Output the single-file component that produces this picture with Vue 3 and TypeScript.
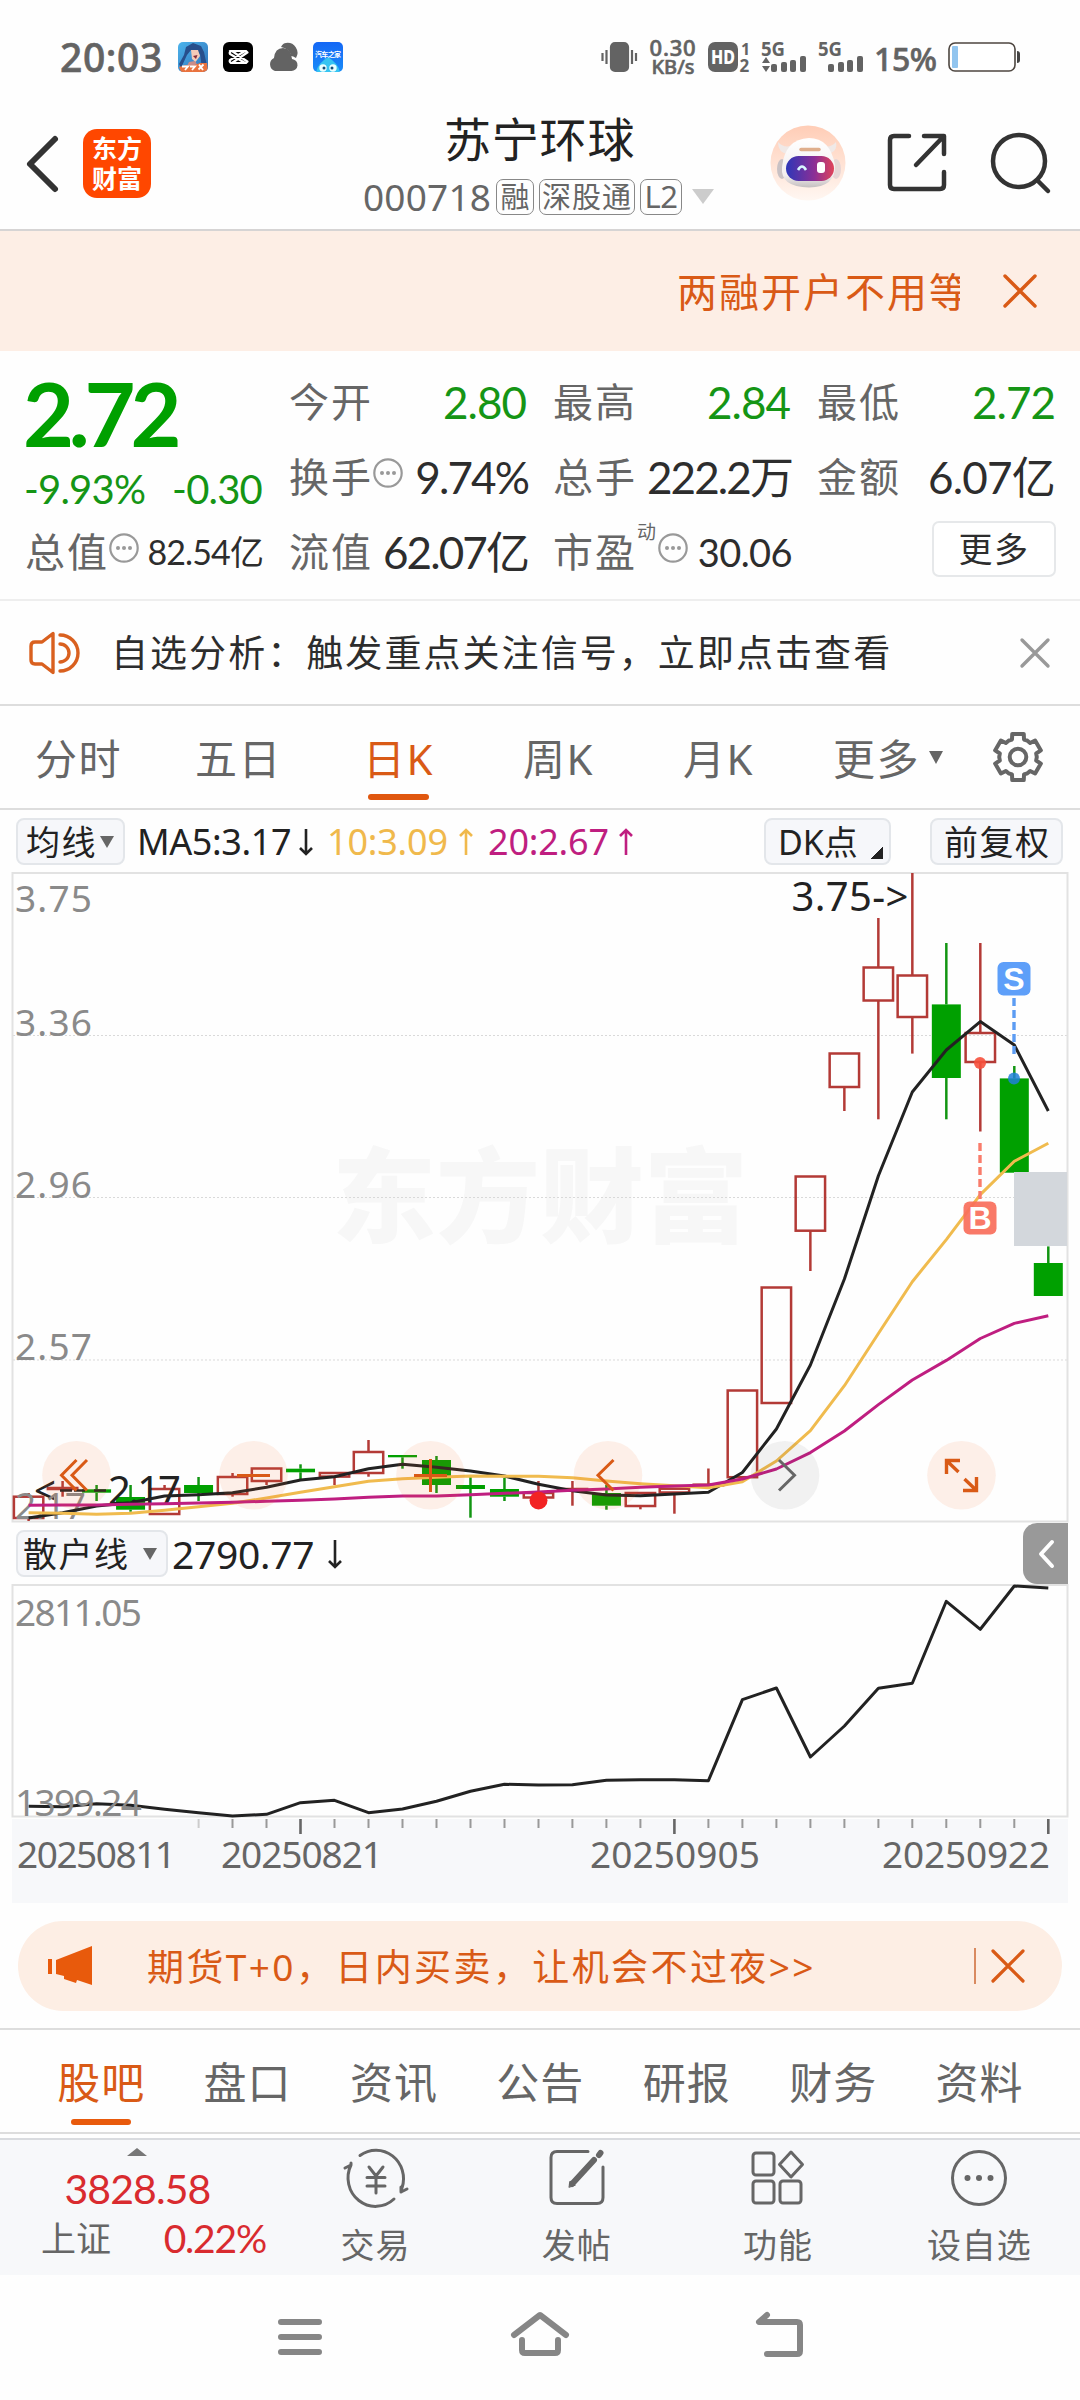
<script setup lang="ts">
type Candle = { up: boolean; top: number; bottom: number; high?: number; low?: number }

const periods = ['分时', '五日', '日K', '周K', '月K']
const sections = ['股吧', '盘口', '资讯', '公告', '研报', '财务', '资料']

// Canvas coordinates are measured from the top of the chart area
const X0 = 28.6
const STEP = 33.99
const TOP = 872
const xAt = (i: number) => X0 + STEP * i
const line = (values: number[], top: number) =>
  values.map((v, i) => `${xAt(i).toFixed(1)},${(v - top).toFixed(1)}`).join(' ')

const candles: Candle[] = [
  { up: true, top: 1496.7, bottom: 1518, high: 1493, low: 1521 },
  { up: true, top: 1488, bottom: 1489, high: 1481, low: 1496.7 },
  { up: false, top: 1489.3, bottom: 1492.7, high: 1485, low: 1501 },
  { up: false, top: 1497, bottom: 1509.7, high: 1485, low: 1511.7 },
  { up: true, top: 1489, bottom: 1514, high: 1485 },
  { up: false, top: 1485, bottom: 1493, high: 1477, low: 1501 },
  { up: true, top: 1477, bottom: 1494, high: 1473, low: 1496.7 },
  { up: true, top: 1468.5, bottom: 1481, low: 1485 },
  { up: false, top: 1468.7, bottom: 1472.3, high: 1464.3, low: 1479 },
  { up: true, top: 1473, bottom: 1476.6, low: 1485 },
  { up: true, top: 1452, bottom: 1473, high: 1440, low: 1476.7 },
  { up: false, top: 1455, bottom: 1457.3, low: 1468.7 },
  { up: false, top: 1460, bottom: 1485, high: 1456, low: 1493 },
  { up: false, top: 1485, bottom: 1489, high: 1477, low: 1517.7 },
  { up: false, top: 1489, bottom: 1496.7, high: 1478, low: 1501 },
  { up: true, top: 1493, bottom: 1497.5, high: 1481 },
  { up: true, top: 1489, bottom: 1490, high: 1481, low: 1505.7 },
  { up: false, top: 1493, bottom: 1505.7, high: 1485, low: 1509.7 },
  { up: true, top: 1493, bottom: 1506, low: 1509.3 },
  { up: true, top: 1488.7, bottom: 1492.5, low: 1513.7 },
  { up: true, top: 1484.7, bottom: 1485.3, high: 1468.5 },
  { up: true, top: 1390.5, bottom: 1477.2 },
  { up: true, top: 1287.5, bottom: 1403 },
  { up: true, top: 1176.5, bottom: 1230.7, low: 1271 },
  { up: true, top: 1053.5, bottom: 1087, low: 1111 },
  { up: true, top: 967.5, bottom: 1000.5, high: 918, low: 1119.3 },
  { up: true, top: 975.5, bottom: 1017, high: 873, low: 1053.6 },
  { up: false, top: 1004.4, bottom: 1078, high: 943, low: 1119.3 },
  { up: true, top: 1033, bottom: 1062, high: 943, low: 1131.5 },
  { up: false, top: 1078.4, bottom: 1172.7, high: 1066 },
  { up: false, top: 1263, bottom: 1296, high: 1246.4 },
]

const ma5 = [1518, 1512.7, 1506, 1502.7, 1496, 1494.7, 1492.7, 1487.3, 1480, 1476.7, 1468.7, 1464.3, 1467.3, 1471, 1476, 1484.3, 1490.7, 1495, 1495.7, 1494, 1492.3, 1472.5, 1429, 1365, 1279, 1175.7, 1092, 1050, 1021.6, 1045, 1111]
const ma10 = [1512.7, 1513.3, 1514.3, 1513.3, 1510.3, 1506.7, 1503.3, 1498, 1492.3, 1486.7, 1481.3, 1478.7, 1477.3, 1476, 1476.3, 1476.3, 1477.7, 1481, 1483.7, 1485.7, 1487.7, 1481.7, 1461, 1430.7, 1385.7, 1333.5, 1281.7, 1239.6, 1194.6, 1161.3, 1143.2]
const ma20 = [1505.3, 1505, 1505, 1504.3, 1503.7, 1503, 1502.3, 1501.3, 1500.3, 1499, 1497.3, 1496, 1496, 1494.7, 1493.3, 1492, 1490.3, 1489, 1487.3, 1486, 1485, 1479, 1469, 1452.6, 1431, 1404.6, 1380, 1360.4, 1338.5, 1323.4, 1315.8]
const retail = [1806.3, 1806.7, 1803.7, 1805.3, 1809.3, 1812.7, 1816, 1814.3, 1802.7, 1800.3, 1812.7, 1809, 1801.3, 1791.3, 1784.3, 1785, 1784.7, 1780.3, 1779.7, 1779.7, 1780.7, 1699.7, 1688, 1757, 1726, 1688.3, 1683.3, 1601.3, 1629.3, 1586, 1588]

const priceLabels = [
  { t: '3.75', y: 911.5 },
  { t: '3.36', y: 1035.5 },
  { t: '2.96', y: 1197.5 },
  { t: '2.57', y: 1359.5 },
]
const dates = [
  { t: '20250811', x: 17, w: 159 },
  { t: '20250821', x: 221, w: 162 },
  { t: '20250905', x: 590, w: 170 },
  { t: '20250922', x: 882, w: 168 },
]
const ticks = Array.from({ length: 26 }, (_, k) => k + 5)

const gear = Array.from({ length: 6 }, (_, k) => {
  const a = -90 + 60 * k
  const spots: [number, number][] = [[-19, 18.5], [-14, 23.8], [14, 23.8], [19, 18.5], [30, 18.8]]
  return spots.map(([d, r]) => {
    const t = ((a + d) * Math.PI) / 180
    return `${(26 + r * Math.cos(t)).toFixed(2)},${(26 + r * Math.sin(t)).toFixed(2)}`
  }).join(' ')
}).join(' ')
</script>

<template>
  <main class="phone">
    <div class="status">
      <span class="clock">20:03</span>
      <svg class="apps" width="166" height="30" viewBox="0 0 166 30">
        <defs>
          <linearGradient id="sky" x1="0" y1="0" x2="1" y2="1">
            <stop offset="0" stop-color="#4cb4ec" /><stop offset="1" stop-color="#2f70b8" />
          </linearGradient>
          <linearGradient id="blue" x1="0" y1="0" x2="0" y2="1">
            <stop offset="0" stop-color="#1467f5" /><stop offset="1" stop-color="#1a8cf8" />
          </linearGradient>
          <clipPath id="a1"><rect width="30" height="30" rx="5" /></clipPath>
          <clipPath id="a4"><rect x="135" width="30" height="30" rx="5" /></clipPath>
        </defs>
        <g clip-path="url(#a1)">
          <rect width="30" height="30" fill="url(#sky)" />
          <path d="M8 5 15 1 23 4 26 10 29 24 24 26 22 12 13 8 9 13 3 26 1 22 6 13z" fill="#274f8c" />
          <path d="M13 8 20 8 22 14 17.500 20 14 17z" fill="#f4cbb8" />
          <path d="M15 14 19.500 13 18 17z" fill="#842b38" />
          <path d="M11 20 17 19 20 24H9z" fill="#c98d8a" />
          <path d="M1 25 8 23 14 24 22 21 29 21 30 30H3z" fill="#e9733f" />
          <path d="M4 24.500h6l-3 3.500M12 24.500h5l-3 3.500M21 22.500l4 5.500M25.500 22.500l-5 5" stroke="#fff" stroke-width="1.800" fill="none" />
        </g>
        <rect x="45" width="30" height="30" rx="6" fill="#000" />
        <path d="M70 10 54 21h14l2-2M70 20 54 9h14l2 2M53 9q-2 1-1 3l15 9M53 21q-2-1-1-3l15-9" fill="none" stroke="#fff" stroke-width="2.200" />
        <path d="M108 1a10 10 0 0 1 10 15q-3-2-5-2-1-7-10-9 2-4 5-4z" fill="#636363" />
        <path d="M97 29a7 7 0 0 1-1-13q1-10 9-10 8 0 9 11a6 6 0 0 1-1 12z" fill="#636363" />
        <g clip-path="url(#a4)">
          <rect x="135" width="30" height="30" fill="url(#blue)" />
          <path d="M138 31Q139 22 150 15q11 7 12 16z" fill="#36c4f2" />
          <circle cx="145" cy="26" r="3.700" fill="#eaffff" /><circle cx="155" cy="26" r="3.700" fill="#eaffff" />
          <circle cx="146" cy="26" r="1.500" fill="#164c78" /><circle cx="154" cy="26" r="1.500" fill="#164c78" />
          <text x="137" y="15" font-size="7" font-weight="700" fill="#fff" textLength="26">汽车之家</text>
        </g>
      </svg>
      <svg class="vibrate" width="37" height="30" viewBox="0 0 37 30" fill="none" stroke="#636363" stroke-width="2.200">
        <rect x="10" y="1" width="17" height="28" rx="4" fill="#636363" />
        <path d="M1.500 11v8M5.500 8v14M31 8v14M35 11v8" />
      </svg>
      <div class="speed"><b>0.30</b><span>KB/s</span></div>
      <svg class="signals" width="160" height="30" viewBox="0 0 160 30" fill="#636363">
        <rect width="30" height="30" rx="7" />
        <text x="3" y="22" font-size="19" font-weight="800" fill="#fff" textLength="24" lengthAdjust="spacingAndGlyphs">HD</text>
        <text x="33" y="12.500" font-size="16" font-weight="700">1</text>
        <text x="31.500" y="30" font-size="17" font-weight="700">2</text>
        <text x="53" y="14" font-size="19" font-weight="700" textLength="24" lengthAdjust="spacingAndGlyphs">5G</text>
        <path d="m58 15 4 6h-8zM58 30l4-6h-8z" />
        <rect x="63" y="22" width="6" height="8" rx="2" /><rect x="73" y="20" width="6" height="10" rx="2" /><rect x="82" y="18" width="6" height="12" rx="2" /><rect x="92" y="14" width="6" height="16" rx="2" />
        <text x="110" y="14" font-size="19" font-weight="700" textLength="24" lengthAdjust="spacingAndGlyphs">5G</text>
        <rect x="120" y="22" width="6" height="8" rx="2" /><rect x="130" y="20" width="6" height="10" rx="2" /><rect x="139" y="18" width="6" height="12" rx="2" /><rect x="149" y="14" width="6" height="16" rx="2" />
      </svg>
      <span class="percent">15%</span>
      <svg class="battery" width="73" height="30" viewBox="0 0 73 30">
        <rect x="1" y="1" width="66" height="28" rx="6" fill="#fff" stroke="#4d4640" stroke-width="1.600" />
        <rect x="4" y="4" width="6" height="22" rx="1" fill="#92c5ef" />
        <path d="M69 9q3 0 3 3v6q0 3-3 3z" fill="#444" />
      </svg>
    </div>

    <header class="head">
      <svg class="back" width="34" height="60" viewBox="0 0 34 60" fill="none" stroke="#333" stroke-width="6" stroke-linecap="round" stroke-linejoin="round"><path d="M30 6 5 31 30 56" /></svg>
      <div class="logo"><span>东方</span><span>财富</span></div>
      <div class="title">
        <h1>苏宁环球</h1>
        <div class="code">
          <span>000718</span><i class="w1">融</i><i class="w3">深股通</i><i class="w2">L2</i><em></em>
        </div>
      </div>
      <svg class="robot" width="76" height="76" viewBox="0 0 76 76">
        <defs>
          <linearGradient id="peach" x1="0" y1="0" x2="0" y2="1"><stop offset="0" stop-color="#ffcdb6" /><stop offset="1" stop-color="#fff7f2" /></linearGradient>
          <linearGradient id="visor"><stop offset="0" stop-color="#2d37b8" /><stop offset=".6" stop-color="#8d2f95" /><stop offset="1" stop-color="#e0435a" /></linearGradient>
          <linearGradient id="shell" x1="0" y1="0" x2="0" y2="1"><stop offset="0" stop-color="#fff" /><stop offset=".75" stop-color="#f3eeee" /><stop offset="1" stop-color="#c4bfc0" /></linearGradient>
        </defs>
        <circle cx="38" cy="38" r="37.500" fill="url(#peach)" />
        <path d="M8 17Q8 28 18 29L24 20Q14 24 8 17zM66 17Q68 28 56 29L51 20Q60 24 66 17z" fill="#f0e9e7" />
        <ellipse cx="12" cy="44" rx="5" ry="10" fill="#c9c1c4" /><ellipse cx="66" cy="44" rx="5" ry="10" fill="#e6d5d5" />
        <path d="M39 13Q60 13 65 40 66 62 39 62.500 10 62 12 42 15 14 39 13z" fill="url(#shell)" />
        <rect x="16" y="31" width="48" height="25" rx="12.500" fill="url(#visor)" />
        <path d="M31 24.500h18" stroke="#dfae8c" stroke-width="3.500" stroke-linecap="round" />
        <path d="M28 45q4-7 8 0" fill="none" stroke="#d8f6ff" stroke-width="2.600" />
        <rect x="47" y="37" width="8" height="11" rx="3" fill="#fff" />
      </svg>
      <svg class="share" width="60" height="60" viewBox="0 0 60 60" fill="none" stroke="#333" stroke-width="4.500" stroke-linecap="round" stroke-linejoin="round">
        <path d="M22 3H7Q3 3 3 7v45q0 4 4 4h46q4 0 4-4V39M37 3h20v18M56 4 29 32" />
      </svg>
      <svg class="search" width="62" height="62" viewBox="0 0 62 62" fill="none" stroke="#333" stroke-width="4.500" stroke-linecap="round"><circle cx="29" cy="29" r="26" /><path d="M48 49 58 59" /></svg>
    </header>

    <div class="marquee">
      <div class="marquee-text">两融开户不用等</div>
      <svg width="36" height="36" viewBox="0 0 36 36" fill="none" stroke="#d95a16" stroke-width="3.400" stroke-linecap="round"><path d="M3 3 33 33M33 3 3 33" /></svg>
    </div>

    <section class="quote">
      <div class="price">
        <strong>2.72</strong>
        <div><span>-9.93%</span><span>-0.30</span></div>
      </div>
      <div class="cell"><label>今开</label><b class="g">2.80</b></div>
      <div class="cell"><label>最高</label><b class="g">2.84</b></div>
      <div class="cell"><label>最低</label><b class="g">2.72</b></div>
      <div class="cell"><label>换手</label><svg class="info" viewBox="0 0 30 30"><circle cx="15" cy="15" r="13.700" fill="none" stroke="#999" stroke-width="2.200" /><circle cx="9" cy="15" r="2" /><circle cx="15" cy="15" r="2" /><circle cx="21" cy="15" r="2" /></svg><b class="tight">9.74%</b></div>
      <div class="cell"><label>总手</label><b class="tight">222.2万</b></div>
      <div class="cell"><label>金额</label><b>6.07亿</b></div>
      <div class="cell"><label>总值</label><svg class="info" viewBox="0 0 30 30"><circle cx="15" cy="15" r="13.700" fill="none" stroke="#999" stroke-width="2.200" /><circle cx="9" cy="15" r="2" /><circle cx="15" cy="15" r="2" /><circle cx="21" cy="15" r="2" /></svg><b class="sm">82.54亿</b></div>
      <div class="cell"><label>流值</label><b class="tight">62.07亿</b></div>
      <div class="cell"><label>市盈</label><sup>动</sup><svg class="info" viewBox="0 0 30 30"><circle cx="15" cy="15" r="13.700" fill="none" stroke="#999" stroke-width="2.200" /><circle cx="9" cy="15" r="2" /><circle cx="15" cy="15" r="2" /><circle cx="21" cy="15" r="2" /></svg><b class="md">30.06</b></div>
      <div class="cell end"><button>更多</button></div>
    </section>

    <div class="notice">
      <svg width="54" height="44" viewBox="0 0 54 44" fill="none" stroke="#d9601f" stroke-width="3.400" stroke-linecap="round" stroke-linejoin="round">
        <path d="M24 2.500v39L13 33H6q-4 0-4-4V15q0-4 4-4h7z" /><path d="M31 13a9 9 0 0 1 0 18M31 4a18 18 0 0 1 0 36" />
      </svg>
      <p>自选分析：触发重点关注信号，立即点击查看</p>
      <svg width="32" height="32" viewBox="0 0 32 32" fill="none" stroke="#999" stroke-width="3.400" stroke-linecap="round"><path d="M3 3 29 29M29 3 3 29" /></svg>
    </div>

    <nav class="periods">
      <a v-for="(p, i) in periods" :key="p" :class="{ on: i === 2 }">{{ p }}</a>
      <a class="more">更多<i></i></a>
      <svg width="52" height="52" viewBox="0 0 52 52" fill="none" stroke="#666" stroke-width="4" stroke-linejoin="round"><polygon :points="gear" /><circle cx="26" cy="26" r="8.300" /></svg>
    </nav>

    <div class="averages">
      <span class="chip avg">均线<i></i></span>
      <span class="ma m5">MA5:3.17</span>
      <svg class="arr" viewBox="0 0 16 30" stroke="#222"><path d="M8 2v25M2 21l6 6 6-6" /></svg>
      <span class="ma m10">10:3.09</span>
      <svg class="arr" viewBox="0 0 16 30" stroke="#f0b94c"><path d="M8 28V3M2 9l6-6 6 6" /></svg>
      <span class="ma m20">20:2.67</span>
      <svg class="arr" viewBox="0 0 16 30" stroke="#bf1e80"><path d="M8 28V3M2 9l6-6 6 6" /></svg>
      <span class="chip dk">DK点<i></i></span>
      <span class="chip adj">前复权</span>
    </div>

    <svg class="kline" width="1080" height="651" viewBox="0 0 1080 651">
      <text class="mark" x="332" y="363" textLength="416" lengthAdjust="spacingAndGlyphs">东方财富</text>
      <g stroke="#d9d9d9" stroke-width="1" stroke-dasharray="2 2"><path d="M13 163.500H1067M13 325.500H1067M13 488H1067" /></g>
      <rect x="12.500" y="1" width="1055" height="648.500" fill="none" stroke="#e2e2e2" stroke-width="2" />
      <text v-for="l in priceLabels" :key="l.t" class="axis" x="15" :y="l.y - TOP" textLength="77">{{ l.t }}</text>
      <g v-for="(c, i) in candles" :key="i" :stroke="c.up ? '#b33a36' : '#129512'" stroke-width="2.500">
        <line v-if="c.high" :x1="xAt(i)" :x2="xAt(i)" :y1="c.high - TOP" :y2="c.top - TOP" />
        <line v-if="c.low" :x1="xAt(i)" :x2="xAt(i)" :y1="c.bottom - TOP" :y2="c.low - TOP" />
        <rect v-if="c.up" :x="xAt(i) - 14.7" :y="c.top - TOP" width="29.400" :height="c.bottom - c.top" fill="none" />
        <rect v-else :x="xAt(i) - 14.5" :y="c.top - TOP" width="29" :height="c.bottom - c.top" fill="#00a000" stroke="none" />
      </g>
      <text class="note" x="34" y="633" textLength="22" lengthAdjust="spacingAndGlyphs">&lt;</text>
      <text class="axis" x="15" y="647" textLength="71">2.17</text>
      <path d="M60 618.500h12M74 618.500h11M94 618.500h12" stroke="#222" stroke-width="2.600" />
      <text class="note" x="108" y="633" textLength="73">2.17</text>
      <g fill="none" stroke-linejoin="round">
        <polyline :points="line(ma5, TOP)" stroke="#222" stroke-width="3" />
        <polyline :points="line(ma10, TOP)" stroke="#f0bb4e" stroke-width="3" />
        <polyline :points="line(ma20, TOP)" stroke="#bf1e80" stroke-width="3" />
      </g>
      <circle cx="538.500" cy="628.500" r="9" fill="#f22323" />
      <text class="note" x="791.500" y="39" textLength="117">3.75-&gt;</text>
      <rect x="1014" y="300" width="53" height="74" fill="#d3d7dc" />
      <path d="M1014 126v56" stroke="#5c9cf3" stroke-width="3.400" stroke-dasharray="8 4" />
      <circle cx="1014" cy="206.400" r="6" fill="#2080d8" opacity=".85" />
      <rect x="997.500" y="90" width="33" height="33.500" rx="6" fill="#5e9ff9" />
      <text class="flag" x="1014" y="118">S</text>
      <path d="M980 271v56" stroke="#f97c6b" stroke-width="3.400" stroke-dasharray="8 4" />
      <circle cx="980" cy="191" r="6" fill="#f6503c" opacity=".9" />
      <rect x="963.500" y="329.500" width="33" height="33" rx="6" fill="#f86e5b" opacity=".92" />
      <text class="flag" x="980" y="357">B</text>
      <g fill="#f66e28" fill-opacity=".1">
        <circle cx="76.500" cy="603.300" r="34.300" /><circle cx="253.500" cy="603.300" r="34.300" /><circle cx="430.500" cy="603.300" r="34.300" /><circle cx="608" cy="603.300" r="34.300" />
        <circle cx="961.500" cy="603.300" r="34.300" /><circle cx="785" cy="603.300" r="34.300" fill="#444" fill-opacity=".07" />
      </g>
      <g fill="none" stroke="#d95a16" stroke-width="3">
        <path d="M76.500 588 61.500 603.300 76.500 618.500M87 588 72 603.300 87 618.500" />
        <path d="M237 603.500h33M414 603.500h33M430.500 587v33" />
        <path d="M613.500 588 598 603.300 613.500 618.500" />
        <path d="M779 588 794.500 603.300 779 618.500" stroke="#666" />
        <path d="M960 588.500H946.500V602M947 589 958.500 600M963 618.500H976.500V605M976 618 964.500 607" stroke-width="3.400" />
      </g>
    </svg>

    <div class="indicator">
      <span class="chip retail">散户线<i></i></span>
      <span class="val">2790.77</span>
      <svg class="arr" viewBox="0 0 16 30" stroke="#222"><path d="M8 1v27M2 22l6 6 6-6" /></svg>
      <span class="drawer"><svg width="18" height="30" viewBox="0 0 18 30" fill="none" stroke="#fff" stroke-width="4" stroke-linecap="round" stroke-linejoin="round"><path d="M15 3 4 15 15 27" /></svg></span>
    </div>

    <svg class="sub" width="1080" height="319" viewBox="0 0 1080 319">
      <rect x="12" y="235" width="1056" height="84" fill="#f7f8fa" />
      <rect x="12.500" y="1" width="1055" height="231.500" fill="none" stroke="#e2e2e2" stroke-width="2" />
      <text class="axis" x="15" y="42" textLength="127">2811.05</text>
      <polyline :points="line(retail, 1584)" fill="none" stroke="#222" stroke-width="3" stroke-linejoin="round" />
      <text class="axis" x="15" y="232" textLength="127">1399.24</text>
      <path v-for="i in ticks" :key="i" :d="`M${xAt(i).toFixed(1)} 235v${(i - 8) % 11 === 0 ? 15 : 9}`" :stroke="(i - 8) % 11 === 0 ? '#666' : i === 5 ? '#ccc' : '#999'" :stroke-width="(i - 8) % 11 === 0 ? 2.6 : 2" />
      <text v-for="d in dates" :key="d.t" class="date" :x="d.x" y="284" :textLength="d.w">{{ d.t }}</text>
    </svg>

    <div class="promo">
      <svg width="47" height="42" viewBox="0 0 47 42" fill="#e85a0c"><path d="M0 14h4v15H0zM8 15 44 1v39L29 35l-1 3-12-4v-3L8 29z" /></svg>
      <p>期货T+0，日内买卖，让机会不过夜&gt;&gt;</p>
      <u></u>
      <svg width="34" height="34" viewBox="0 0 34 34" fill="none" stroke="#d95a16" stroke-width="3.200" stroke-linecap="round"><path d="M2 2 32 32M32 2 2 32" /></svg>
    </div>

    <nav class="sections">
      <a v-for="(s, i) in sections" :key="s" :class="{ on: i === 0 }">{{ s }}</a>
    </nav>

    <footer class="dock">
      <div class="index">
        <em></em>
        <b>3828.58</b>
        <div><span>上证</span><b>0.22%</b></div>
      </div>
      <div class="act">
        <svg width="66" height="60" viewBox="0 0 66 60" fill="none" stroke="#666" stroke-width="3" stroke-linecap="round" stroke-linejoin="round">
          <path d="M17 7.500A27.500 28.500 0 0 1 59 40M51 51A27.500 28.500 0 0 1 8 17M8 17 2 20M8 17V15M58 44 64 41M58 44v-5M26 19l7 9 7-9M33 28v17M24 29.500h18M24 38h18" />
        </svg><span>交易</span>
      </div>
      <div class="act">
        <svg width="60" height="60" viewBox="0 0 60 60" fill="none" stroke="#666" stroke-width="3" stroke-linecap="round">
          <path d="M41 3.500H10q-6 0-6 6v40q0 6 6 6h40q6 0 6-6V19" /><path d="M47 12 25 36" stroke-width="6" /><path d="m22 39 1-6 5 4z" fill="#666" stroke-width="1" /><path d="M53.500 5 52 7" stroke-width="6" />
        </svg><span>发帖</span>
      </div>
      <div class="act">
        <svg width="60" height="60" viewBox="0 0 60 60" fill="none" stroke="#666" stroke-width="3" stroke-linejoin="round">
          <rect x="5" y="5" width="21" height="22" rx="3" /><rect x="5" y="33" width="21" height="22" rx="3" /><rect x="32" y="33" width="21" height="22" rx="3" /><path d="M43 4 54.500 16.500 43 29 31.500 16.500z" />
        </svg><span>功能</span>
      </div>
      <div class="act">
        <svg width="60" height="60" viewBox="0 0 60 60" fill="none" stroke="#666" stroke-width="3"><circle cx="30" cy="30" r="26.500" /><g fill="#666" stroke="none"><circle cx="18.500" cy="30" r="3" /><circle cx="30" cy="30" r="3" /><circle cx="41.500" cy="30" r="3" /></g></svg><span>设自选</span>
      </div>
    </footer>

    <div class="keys">
      <svg width="46" height="40" viewBox="0 0 46 40" stroke="#868686" stroke-width="6" stroke-linecap="round"><path d="M4 5h38M4 20h38M4 35h38" /></svg>
      <svg width="62" height="48" viewBox="0 0 62 48" fill="none" stroke="#868686" stroke-width="6" stroke-linecap="round" stroke-linejoin="round"><path d="M5 25 31 5 57 25" /><path d="M13 30v10q0 3 3 3h30q3 0 3-3V30" /></svg>
      <svg width="52" height="48" viewBox="0 0 52 48" fill="none" stroke="#868686" stroke-width="6" stroke-linecap="round" stroke-linejoin="round"><path d="M14 4 6 11H44q3 0 3 3v26q0 3-3 3H14" /></svg>
    </div>
  </main>
</template>

<style>
body { background: #fefefe; }
</style>

<style scoped>
* { box-sizing: border-box; }
.phone { width: 1080px; height: 2400px; overflow: hidden; background: #fefefe; color: #2d2d2d; font-family: "Noto Sans", "Noto Sans CJK SC", sans-serif; line-height: 1; white-space: nowrap; }
svg { display: block; flex: none; overflow: visible; }
h1, p { margin: 0; font-weight: 400; }
i, em { font-style: normal; }
b { font-weight: 400; }

.status { display: flex; align-items: center; height: 114px; padding-left: 60px; color: #636363; }
.clock, .speed, .percent { -webkit-text-stroke: .6px #636363; }
.clock { width: 118px; font-size: 39px; letter-spacing: .6px; font-weight: 500; margin-top: -1px; }
.vibrate { margin-left: 257px; }
.speed { display: flex; flex-direction: column; align-items: center; width: 56px; margin: 0 7px 0 7px; font-weight: 500; line-height: 20px; }
.speed b { font-size: 22px; font-weight: 500; letter-spacing: .8px; }
.speed span { font-size: 20px; }
.signals { margin-right: 6px; }
.percent { width: 74px; font-size: 32px; font-weight: 500; margin-top: 4px; letter-spacing: -.4px; }

.head { display: flex; align-items: center; height: 117px; padding: 0 0 17px 25px; border-bottom: 2px solid #d6d4d4; }
.logo { display: flex; flex-direction: column; align-items: center; justify-content: center; width: 68px; height: 69px; margin-left: 24px; border-radius: 14px; background: #ff4700; color: #fff; font-size: 25px; font-weight: 700; line-height: 30px; }
.title { display: flex; flex-direction: column; width: 401px; margin: 12px 0 0 212px; }
h1 { font-size: 47px; letter-spacing: .800px; line-height: 54px; color: #222; margin: -9px 0 0 81px; }
.code { display: flex; align-items: center; height: 46px; margin: 8px 0 -2px; font-size: 37px; color: #666; }
.code span { width: 133px; letter-spacing: .2px; }
.code i { display: flex; align-items: center; justify-content: center; height: 36px; border: 1.500px solid #888; border-radius: 7px; font-size: 29px; margin-right: 5px; }
.w1 { width: 38px; }
.w3 { width: 96px; letter-spacing: 1px; }
.code .w2 { width: 42px; font-size: 31px; letter-spacing: -.5px; }
.code em { margin-left: 5px; border: 11px solid transparent; border-top: 15px solid #ccc; border-bottom: 0; }
.robot { margin-left: 6px; }
.share { margin-left: 41px; }
.search { margin-left: 43px; }

.marquee { display: flex; align-items: center; height: 120px; padding-left: 677px; background: #fdeee5; color: #d95a16; }
.marquee-text { width: 283px; overflow: hidden; font-size: 40px; line-height: 56px; letter-spacing: 2px; margin-top: 2px; }
.marquee svg { margin-left: 42px; }

.quote { display: grid; grid-template-columns: 237px 237px 237px 238px; grid-auto-rows: 75px; column-gap: 27px; height: 250px; padding: 13px 25px 0 25px; border-bottom: 2px solid #eee; }
.price { grid-row: span 2; color: #00a000; font-family: Lato, "Noto Sans", sans-serif; }
.price strong { display: block; height: 88px; font-size: 88px; line-height: 98px; font-weight: 700; letter-spacing: -5.200px; margin-left: -2px; }
.price div { display: flex; justify-content: space-between; height: 60px; font-size: 40px; line-height: 74px; letter-spacing: -.8px; color: #159515; }
.price span:first-child { margin-left: -1px; }
.cell { display: flex; align-items: center; }
.cell label { font-size: 40px; letter-spacing: 2px; color: #666; }
.cell b { margin-left: auto; font-family: Lato, "Noto Sans CJK SC", sans-serif; font-size: 44px; letter-spacing: -.8px; }
.cell .g { color: #159515; letter-spacing: -1px; }
.cell .tight { letter-spacing: -1.900px; margin-right: -2px; }
.cell .sm { font-size: 34px; letter-spacing: -.9px; margin-right: -1px; }
.cell .md { font-size: 38px; letter-spacing: -.6px; margin-right: -2px; }
.cell sup { font-size: 19px; color: #666; margin: -38px 0 0 0; }
.info { width: 30px; height: 30px; margin: -8px 0 0; fill: #999; }
sup + .info { margin-left: 2px; }
.cell.end { justify-content: flex-end; }
.cell button { width: 124px; height: 56px; margin: -6px -1px 0 0; border: 2px solid #e6e8ea; border-radius: 7px; background: #fff; color: #2d2d2d; font: 34px "Noto Sans", "Noto Sans CJK SC", sans-serif; letter-spacing: 1.500px; line-height: 1; }

.notice { display: flex; align-items: center; height: 105px; padding-left: 29px; border-bottom: 2px solid #ddd; }
.notice p { width: 906px; padding-left: 28px; font-size: 37px; letter-spacing: 2.060px; }
.notice svg:last-child { margin-left: 30px; }

.periods { display: grid; grid-template-columns: repeat(5, 160px) 192px 52px; align-items: center; height: 104px; border-bottom: 2px solid #ddd; font-size: 42px; color: #666; }
.periods a { display: flex; flex-direction: column; align-items: center; justify-content: center; height: 102px; padding: 3px 3px 0 0; letter-spacing: 1.500px; }
.periods .on { color: #d95a16; position: relative; }
.periods .on::after { content: ""; position: absolute; left: 48px; top: 88px; width: 61px; height: 6px; border-radius: 3px; background: #e0570f; }
.periods .more { flex-direction: row; justify-content: flex-start; padding-left: 33px; }
.more i { margin: -2px 0 0 9px; border: 7.500px solid transparent; border-top: 13px solid #666; border-bottom: 0; }

.averages { display: flex; align-items: center; height: 62px; padding: 1px 0 0 16px; font-size: 36px; }
.chip { display: flex; align-items: center; height: 47px; border: 2px solid #e3e6ea; border-radius: 8px; background: #f6f7fa; color: #222; font-size: 34px; letter-spacing: 1.500px; }
.chip i { border: 7.500px solid transparent; border-top: 12px solid #666; border-bottom: 0; }
.avg { width: 109px; padding-left: 8px; }
.avg i { margin-left: 3px; }
.ma { letter-spacing: -.2px; }
.m5 { width: 161px; margin-left: 12px; color: #222; letter-spacing: -.4px; }
.m10 { width: 131px; margin-left: 13px; color: #f0b94c; }
.m20 { width: 130px; margin-left: 14px; color: #bf1e80; }
.arr { width: 16px; height: 30px; fill: none; stroke-width: 2.600; }
.dk { width: 127px; padding-left: 12px; margin-left: 130px; letter-spacing: 0; }
.dk i { margin: 22px 0 0 13px; border: 0; width: 12px; height: 12px; background: linear-gradient(135deg, transparent 50%, #222 50%); }
.adj { width: 133px; margin-left: 39px; padding-left: 12px; }

svg text { font-family: "Noto Sans", "Noto Sans CJK SC", sans-serif; }
.axis { font-size: 37px; fill: #8a8a8a; }
.note { font-size: 40px; fill: #222; }
.date { font-size: 37px; fill: #666; }
.mark { font-size: 103px; font-weight: 900; fill: #f7f7f7; }
svg .flag { font: 700 32px "Liberation Sans", sans-serif; fill: #fff; text-anchor: middle; }

.indicator { display: flex; align-items: center; height: 61px; padding: 0 12px 0 16px; }
.retail { width: 152px; padding-left: 5px; }
.retail i { margin-left: 13px; }
.val { width: 155px; margin-left: 4px; font-size: 39px; letter-spacing: -.3px; color: #222; }
.drawer { display: flex; align-items: center; justify-content: center; width: 45px; height: 61px; margin-left: auto; border-radius: 14px 0 0 14px; background: #999; }

.promo { display: flex; align-items: center; width: 1044px; height: 90px; margin: 18px 18px 17px; padding-left: 30px; border-radius: 45px; background: #fdeee4; color: #d95a16; }
.promo p { width: 879px; padding-left: 52px; font-size: 37px; letter-spacing: 2.400px; }
.promo u { width: 1.500px; height: 36px; background: #d98a60; }
.promo svg:last-child { margin-left: 15px; }

.sections { display: grid; grid-template-columns: repeat(7, 146.400px); height: 106px; padding-left: 28px; border: solid #ddd; border-width: 2px 0; font-size: 43px; color: #666; }
.sections a { display: flex; justify-content: center; align-items: center; letter-spacing: 1px; height: 104px; }
.sections .on { color: #d95a16; position: relative; }
.sections .on::after { content: ""; position: absolute; left: 43px; top: 89px; width: 60px; height: 6px; border-radius: 3px; background: #e85a0c; }

.dock { display: flex; height: 137px; margin-top: 4px; border-top: 2px solid #d9dbdf; background: #f7f8fa; color: #666; }
.index { display: flex; flex-direction: column; align-items: center; width: 275px; }
.index em { margin-top: 8px; border: 10.500px solid transparent; border-bottom: 8px solid #777; border-top: 0; }
.index b { color: #d92b2f; font-size: 41px; line-height: 60px; letter-spacing: -.9px; font-family: Lato, "Noto Sans", sans-serif; }
.index > b { margin-top: 3px; }
.index div { display: flex; width: 225px; margin-left: 32px; justify-content: space-between; align-items: center; height: 38px; }
.index div span { font-size: 35px; }
.index div b { font-size: 39px; letter-spacing: -1.200px; }
.act { display: flex; flex-direction: column; align-items: center; width: 201.300px; padding-top: 8px; font-size: 34px; letter-spacing: 1px; }
.act span { margin-top: 20px; }

.keys { display: flex; align-items: flex-start; padding: 40px 0 0 277px; height: 125px; }
.keys svg:nth-child(1) { margin-top: 2px; }
.keys svg:nth-child(2) { margin-left: 186px; margin-top: -5px; }
.keys svg:nth-child(3) { margin-left: 182px; margin-top: -4px; }
</style>
